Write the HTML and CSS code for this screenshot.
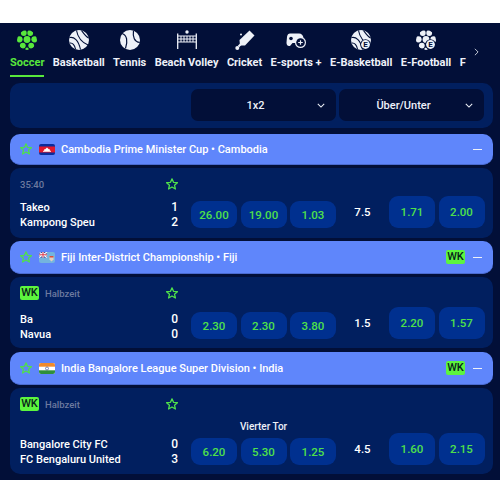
FILE: index.html
```html
<!DOCTYPE html>
<html lang="de">
<head>
<meta charset="utf-8">
<title>Live</title>
<link rel="stylesheet" href="styles.css">
</head>
<body>
<svg class="defs" width="0" height="0" aria-hidden="true">
  <defs>
    <polygon id="star" points="6,0.8 7.5,4.3 11.4,4.7 8.5,7.2 9.4,11 6,9 2.600,11 3.500,7.2 0.600,4.700 4.500,4.300" fill="none" stroke="currentColor" stroke-width="1.300" stroke-linejoin="round"/>
    <clipPath id="ball-clip"><circle cx="10" cy="10" r="10"/></clipPath>
    <g id="ball" clip-path="url(#ball-clip)">
      <circle cx="6.800" cy="3" r="2.900"/>
      <circle cx="13.200" cy="3" r="2.900"/>
      <circle cx="2.500" cy="9.300" r="3.100"/>
      <circle cx="10" cy="9.500" r="3.400"/>
      <circle cx="17.500" cy="9.300" r="3.100"/>
      <circle cx="5.800" cy="15.600" r="2.900"/>
      <circle cx="14.200" cy="15.600" r="2.900"/>
      <circle cx="10" cy="19.300" r="1.700"/>
    </g>
    <g id="hoop">
      <circle cx="10" cy="10" r="10" fill="currentColor"/>
      <g fill="none" stroke="#020f38" stroke-width="1.100">
        <path d="M7.500 0.500C8.500 6 12 12 19 15"/>
        <path d="M12.500 0.500C15 4 17 7 19.600 8"/>
        <path d="M0.500 7.500C5 6.500 9.500 10 11.500 19.500"/>
        <path d="M0.800 13C3.500 12.500 5.800 15 6.500 19"/>
      </g>
    </g>
  </defs>
</svg>

<main class="app">
  <nav class="sports">
    <div class="sport active">
      <svg class="sport-icon" viewBox="0 0 20 20"><use href="#ball" fill="currentColor"/></svg>
      <span class="sport-name">Soccer</span>
    </div>
    <div class="sport">
      <svg class="sport-icon" viewBox="0 0 20 20"><use href="#hoop"/></svg>
      <span class="sport-name">Basketball</span>
    </div>
    <div class="sport">
      <svg class="sport-icon" viewBox="0 0 20 20">
        <circle cx="10" cy="10" r="10" fill="currentColor"/>
        <path d="M2 3.500C7 5 8 11 5.500 18.500M13.500 0.700C12.500 7 14.500 12 19.700 12.500" fill="none" stroke="#020f38" stroke-width="1.200"/>
      </svg>
      <span class="sport-name">Tennis</span>
    </div>
    <div class="sport">
      <svg class="sport-icon" viewBox="0 0 20 20">
        <path d="M0.700 3.500V19M19.300 3.500V19" fill="none" stroke="currentColor" stroke-width="1.300"/>
        <path d="M1 6H19M1 9H19M1 12H19M4 6V12M7 6V12M10 6V12M13 6V12M16 6V12" fill="none" stroke="currentColor" stroke-width="1"/>
        <circle cx="10" cy="2" r="1.700" fill="currentColor"/>
      </svg>
      <span class="sport-name">Beach Volley</span>
    </div>
    <div class="sport">
      <svg class="sport-icon" viewBox="0 0 20 20">
        <path d="M14.500 0.500L19.500 5.500L10 15.500L5 15.500L4.500 10Z" fill="currentColor"/>
        <path d="M6 14L3.500 16.500" stroke="currentColor" stroke-width="2"/>
        <circle cx="2.300" cy="18" r="2" fill="currentColor"/>
        <circle cx="6" cy="4.500" r="1" fill="currentColor"/>
      </svg>
      <span class="sport-name">Cricket</span>
    </div>
    <div class="sport">
      <svg class="sport-icon" viewBox="0 0 20 20">
        <path d="M4 3.500H13C15.500 3.500 17 5 17.500 8L14 9L11 13H6.500L4 16C1.500 16.500 0.500 15 0.500 12.500L1 7C1.300 4.500 2.500 3.500 4 3.500Z" fill="currentColor"/>
        <circle cx="5" cy="8.500" r="1.800" fill="#020f38"/>
        <circle cx="14.500" cy="12.500" r="5.500" fill="currentColor"/>
        <circle cx="14.500" cy="12.500" r="4.300" fill="#020f38"/>
        <path d="M12.200 12.500H16.800M14.500 10.200V14.800" stroke="currentColor" stroke-width="1.200"/>
      </svg>
      <span class="sport-name">E-sports +</span>
    </div>
    <div class="sport">
      <svg class="sport-icon" viewBox="0 0 20 20">
        <use href="#hoop"/>
        <circle cx="14.500" cy="14.500" r="5.300" fill="#020f38"/>
        <circle cx="14.500" cy="14.500" r="4.400" fill="currentColor"/>
        <text class="badge-letter" x="14.500" y="17.300">E</text>
      </svg>
      <span class="sport-name">E-Basketball</span>
    </div>
    <div class="sport">
      <svg class="sport-icon" viewBox="0 0 20 20">
        <use href="#ball" fill="currentColor"/>
        <circle cx="14.500" cy="14.500" r="5.300" fill="#020f38"/>
        <circle cx="14.500" cy="14.500" r="4.400" fill="currentColor"/>
        <text class="badge-letter" x="14.500" y="17.300">E</text>
      </svg>
      <span class="sport-name">E-Football</span>
    </div>
    <div class="sport sport-cut">
      <span class="sport-name">F</span>
    </div>
    <svg class="nav-arrow" viewBox="0 0 6 10"><path d="M1 1L5 5L1 9" fill="none" stroke="currentColor" stroke-width="1"/></svg>
  </nav>

  <section class="market-bar">
    <div class="select">
      <span class="select-label">1x2</span>
      <svg class="chevron" viewBox="0 0 10 6"><path d="M1 1L5 5L9 1" fill="none" stroke="currentColor" stroke-width="1.300"/></svg>
    </div>
    <div class="select">
      <span class="select-label">Über/Unter</span>
      <svg class="chevron" viewBox="0 0 10 6"><path d="M1 1L5 5L9 1" fill="none" stroke="currentColor" stroke-width="1.300"/></svg>
    </div>
  </section>

  <header class="league league-first">
    <svg class="star" viewBox="0 0 12 12"><use href="#star"/></svg>
    <svg class="flag" viewBox="0 0 16 11">
      <rect width="16" height="11" fill="#0a2c9c"/>
      <rect y="2.500" width="16" height="6" fill="#e0182d"/>
      <path d="M4 7.800H12V7L10.800 6.500V5.300H9.800L8 3.500L6.200 5.300H5.200V6.500L4 7Z" fill="#fff"/>
    </svg>
    <span class="league-title">Cambodia Prime Minister Cup • Cambodia</span>
    <span class="minus"></span>
  </header>
  <article class="match match-a">
    <div class="match-info">
      <div class="match-top">
        <span class="status">35:40</span>
        <svg class="star" viewBox="0 0 12 12"><use href="#star"/></svg>
      </div>
      <div class="teams">
        <div class="team"><span>Takeo</span><span>1</span></div>
        <div class="team"><span>Kampong Speu</span><span>2</span></div>
      </div>
    </div>
    <div class="markets">
      <div class="odds-3">
        <button class="odd">26.00</button>
        <button class="odd">19.00</button>
        <button class="odd">1.03</button>
      </div>
      <div class="over-under">
        <span class="line">7.5</span>
        <button class="odd odd-tall">1.71</button>
        <button class="odd odd-tall">2.00</button>
      </div>
    </div>
  </article>

  <header class="league">
    <svg class="star" viewBox="0 0 12 12"><use href="#star"/></svg>
    <svg class="flag" viewBox="0 0 16 11">
      <rect width="16" height="11" fill="#74b4de"/>
      <rect width="8" height="5.500" fill="#2a3f8f"/>
      <path d="M0 0L8 5.500M8 0L0 5.500" stroke="#fff" stroke-width="1.200"/>
      <path d="M4 0V5.500M0 2.750H8" stroke="#fff" stroke-width="1.800"/>
      <path d="M4 0V5.500M0 2.750H8" stroke="#d8283c" stroke-width="0.900"/>
      <path d="M10.500 4H14.500V7.500L12.500 9.500L10.500 7.500Z" fill="#e3cfc0"/>
      <rect x="10.500" y="4" width="4" height="1.500" fill="#d8503c"/>
    </svg>
    <span class="league-title">Fiji Inter-District Championship • Fiji</span>
    <span class="wk">WK</span>
    <span class="minus"></span>
  </header>
  <article class="match match-b">
    <div class="match-info">
      <div class="match-top">
        <span class="wk">WK</span>
        <span class="status">Halbzeit</span>
        <svg class="star" viewBox="0 0 12 12"><use href="#star"/></svg>
      </div>
      <div class="teams">
        <div class="team"><span>Ba</span><span>0</span></div>
        <div class="team"><span>Navua</span><span>0</span></div>
      </div>
    </div>
    <div class="markets">
      <div class="odds-3">
        <button class="odd">2.30</button>
        <button class="odd">2.30</button>
        <button class="odd">3.80</button>
      </div>
      <div class="over-under">
        <span class="line">1.5</span>
        <button class="odd odd-tall">2.20</button>
        <button class="odd odd-tall">1.57</button>
      </div>
    </div>
  </article>

  <header class="league league-spaced">
    <svg class="star" viewBox="0 0 12 12"><use href="#star"/></svg>
    <svg class="flag" viewBox="0 0 16 11">
      <rect width="16" height="11" fill="#fff"/>
      <rect width="16" height="3.700" fill="#f08a2c"/>
      <rect y="7.300" width="16" height="3.700" fill="#2f8f3a"/>
      <circle cx="8" cy="5.500" r="1.500" fill="none" stroke="#2a3f8f" stroke-width="0.600"/>
    </svg>
    <span class="league-title">India Bangalore League Super Division • India</span>
    <span class="wk">WK</span>
    <span class="minus"></span>
  </header>
  <article class="match match-c">
    <div class="match-info">
      <div class="match-top">
        <span class="wk">WK</span>
        <span class="status">Halbzeit</span>
        <svg class="star" viewBox="0 0 12 12"><use href="#star"/></svg>
      </div>
      <div class="teams">
        <div class="team"><span>Bangalore City FC</span><span>0</span></div>
        <div class="team"><span>FC Bengaluru United</span><span>3</span></div>
      </div>
    </div>
    <div class="markets">
      <div class="odds-3-wrap">
        <div class="market-note">Vierter Tor</div>
        <div class="odds-3">
          <button class="odd">6.20</button>
          <button class="odd">5.30</button>
          <button class="odd">1.25</button>
        </div>
      </div>
      <div class="over-under">
        <span class="line">4.5</span>
        <button class="odd odd-tall">1.60</button>
        <button class="odd odd-tall">2.15</button>
      </div>
    </div>
  </article>
</main>
</body>
</html>
```
FILE: styles.css
```css
* { box-sizing: border-box; }

html, body {
  margin: 0;
  padding: 0;
  background: #fff;
}

body {
  font-family: Roboto, "Liberation Sans", sans-serif;
  color: #eef1f8;
  overflow: hidden;
}

.defs { position: absolute; }

.app {
  margin-top: 23px;
  padding-bottom: 3px;
  background: #020f38;
  display: flex;
  flex-direction: column;
}

/* sports navigation */
.sports {
  position: relative;
  height: 60px;
  display: flex;
  gap: 8.400px;
  padding: 7px 0 0 10px;
  overflow: hidden;
}

.sport {
  display: flex;
  flex-direction: column;
  align-items: center;
  height: 47px;
  gap: 7px;
  border-bottom: 2px solid transparent;
  flex: none;
}

.sport.active {
  color: #58e83c;
  border-bottom-color: #58e83c;
}

.sport-cut { padding-top: 27px; }

.sport-icon {
  display: block;
  width: 20px;
  height: 20px;
  flex: none;
}

.sport-name {
  font-size: 11px;
  font-weight: 700;
  line-height: 11px;
  white-space: nowrap;
}

.badge-letter {
  fill: #020f38;
  font-family: Roboto, sans-serif;
  font-size: 8px;
  font-weight: 700;
  text-anchor: middle;
}

.nav-arrow {
  position: absolute;
  left: 474px;
  top: 25px;
  width: 5px;
  height: 8px;
}

/* market selector */
.market-bar {
  height: 45px;
  margin: 0 7px 6px 10px;
  padding: 6px 9px 7px;
  border-radius: 10px;
  background: #011f5f;
  display: flex;
  justify-content: flex-end;
  gap: 3px;
}

.select {
  width: 145px;
  height: 32px;
  border-radius: 7px;
  background: #020f38;
  padding: 0 11px 0 3px;
  display: flex;
  align-items: center;
}

.select-label {
  flex: 1;
  text-align: center;
  font-size: 11px;
  font-weight: 500;
}

.chevron {
  width: 8px;
  height: 5px;
  flex: none;
}

/* league header */
.league {
  height: 33px;
  margin: 0 7px 3px 10px;
  padding: 0 11px 0 10px;
  border-radius: 10px;
  background: #5f86fb;
  border-bottom: 1px solid #4a6bd0;
  display: flex;
  align-items: center;
}

.league-first { height: 31px; }

.league-spaced { margin-top: 1px; }

.star {
  width: 12px;
  height: 12px;
  color: #4fe04a;
  flex: none;
}

.flag {
  width: 16px;
  height: 11px;
  margin-left: 7px;
  border-radius: 2px;
  flex: none;
}

.league-title {
  margin-left: 6px;
  flex: 1;
  font-size: 11px;
  font-weight: 500;
  color: #fff;
  white-space: nowrap;
}

.minus {
  width: 9px;
  height: 1px;
  margin-left: 8px;
  background: #eef1f8;
  flex: none;
}

.wk {
  width: 19px;
  height: 14px;
  border-radius: 2px;
  background: #5cf53e;
  color: #08241a;
  font-size: 11px;
  font-weight: 500;
  line-height: 14px;
  text-align: center;
  flex: none;
}

/* match card */
.match {
  margin: 0 7px 3px 10px;
  padding: 9px 9px 8px 10px;
  border-radius: 10px;
  background: #011f5f;
  display: flex;
  align-items: flex-end;
  gap: 13px;
  height: 70px;
}

.match-b { height: 71px; padding-bottom: 6px; }

.match-c { height: 86px; padding-bottom: 7px; }

.match-info {
  width: 158px;
  height: 100%;
  display: flex;
  flex-direction: column;
  justify-content: space-between;
  flex: none;
}

.match-top {
  height: 14px;
  display: flex;
  align-items: center;
  gap: 6px;
}

.match-top .star { margin-left: auto; }

.status {
  font-size: 9.500px;
  font-weight: 500;
  color: #6d7a9f;
}

.teams {
  font-size: 11px;
  font-weight: 500;
  line-height: 15px;
  color: #fff;
}

.team {
  display: flex;
  justify-content: space-between;
}

.team span:last-child { font-size: 12px; }

.markets {
  flex: 1;
  display: flex;
  align-items: flex-end;
  margin-bottom: 2px;
}

.match-b .markets { margin-bottom: 3px; }

.odds-3 {
  display: flex;
  gap: 3.500px;
}

.market-note {
  margin-bottom: 5px;
  text-align: center;
  font-size: 10px;
  font-weight: 500;
  line-height: 13px;
}

.over-under {
  margin-left: auto;
  display: flex;
  align-items: center;
  gap: 3.500px;
}

.line {
  width: 53px;
  margin-right: -3.500px;
  text-align: center;
  font-size: 11.500px;
  font-weight: 500;
  color: #fff;
}

.odd {
  width: 46px;
  height: 27px;
  padding: 0;
  border: 0;
  border-radius: 9px;
  background: #00308f;
  color: #4fe04a;
  font-family: inherit;
  font-size: 11.500px;
  font-weight: 500;
}

.odd-tall { height: 32px; }
```
